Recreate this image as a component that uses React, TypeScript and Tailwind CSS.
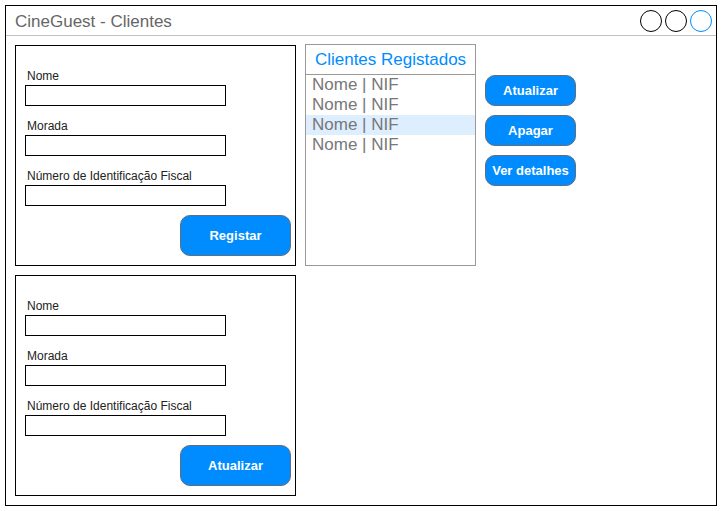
import React from "react";

const Field = ({ label, first }: { label: string; first?: boolean }) => (
  <div className={first ? "" : "mt-[13px]"}>
    <div className="h-[15px] text-[12px] leading-[15px] text-[#222] pl-[2px]">{label}</div>
    <div className="mt-[1px] h-[21px] w-[201px] border border-black bg-white" />
  </div>
);

const FormPanel = ({ action }: { action: string }) => (
  <div className="flex h-[221px] w-[281px] flex-col border border-black pl-[9px] pr-[4px] pt-[23px]">
    <Field label="Nome" first />
    <Field label="Morada" />
    <Field label="Número de Identificação Fiscal" />
    <div className="mt-[9px] flex justify-end">
      <button className="h-[41px] w-[111px] rounded-[10px] border border-[#5f6f80] bg-[#008cff] text-[13px] font-bold text-white">
        {action}
      </button>
    </div>
  </div>
);

const SideButton = ({ label }: { label: string }) => (
  <button className="h-[31px] w-[91px] rounded-[10px] border border-[#5f6f80] bg-[#008cff] text-[13px] font-bold text-white">
    {label}
  </button>
);

export default function App() {
  const rows = ["Nome | NIF", "Nome | NIF", "Nome | NIF", "Nome | NIF"];
  return (
    <div className="h-[511px] w-[721px] bg-white p-[5px] font-['Liberation_Sans',Arial,sans-serif]">
      <div className="flex h-[501px] w-[712px] flex-col border border-black">
        {/* title bar */}
        <div className="flex h-[30px] items-center justify-between border-b border-[#c0c0c0] pl-[9px] pr-[4px]">
          <span className="pt-[2px] text-[17px] text-[#666]">CineGuest - Clientes</span>
          <div className="flex gap-[3px]">
            <div className="h-[22px] w-[22px] rounded-full border border-black" />
            <div className="h-[22px] w-[22px] rounded-full border border-black" />
            <div className="h-[22px] w-[22px] rounded-full border border-[#008cff]" />
          </div>
        </div>

        <div className="flex gap-[9px] pl-[9px] pt-[8px]">
          <div className="flex flex-col gap-[9px] pt-[1px]">
            <FormPanel action="Registar" />
            <FormPanel action="Atualizar" />
          </div>

          <div className="flex h-[222px] w-[171px] flex-col border border-[#999]">
            <div className="flex h-[30px] items-center justify-center border-b border-[#999] text-[17px] text-[#008cff]">
              Clientes Registados
            </div>
            {rows.map((r, i) => (
              <div
                key={i}
                className={
                  "h-[20px] pl-[6px] text-[17px] leading-[20px] text-[#777] " +
                  (i === 2 ? "bg-[#ddeeff]" : "")
                }
              >
                {r}
              </div>
            ))}
          </div>

          <div className="flex flex-col gap-[9px] pt-[31px]">
            <SideButton label="Atualizar" />
            <SideButton label="Apagar" />
            <SideButton label="Ver detalhes" />
          </div>
        </div>
      </div>
    </div>
  );
}
